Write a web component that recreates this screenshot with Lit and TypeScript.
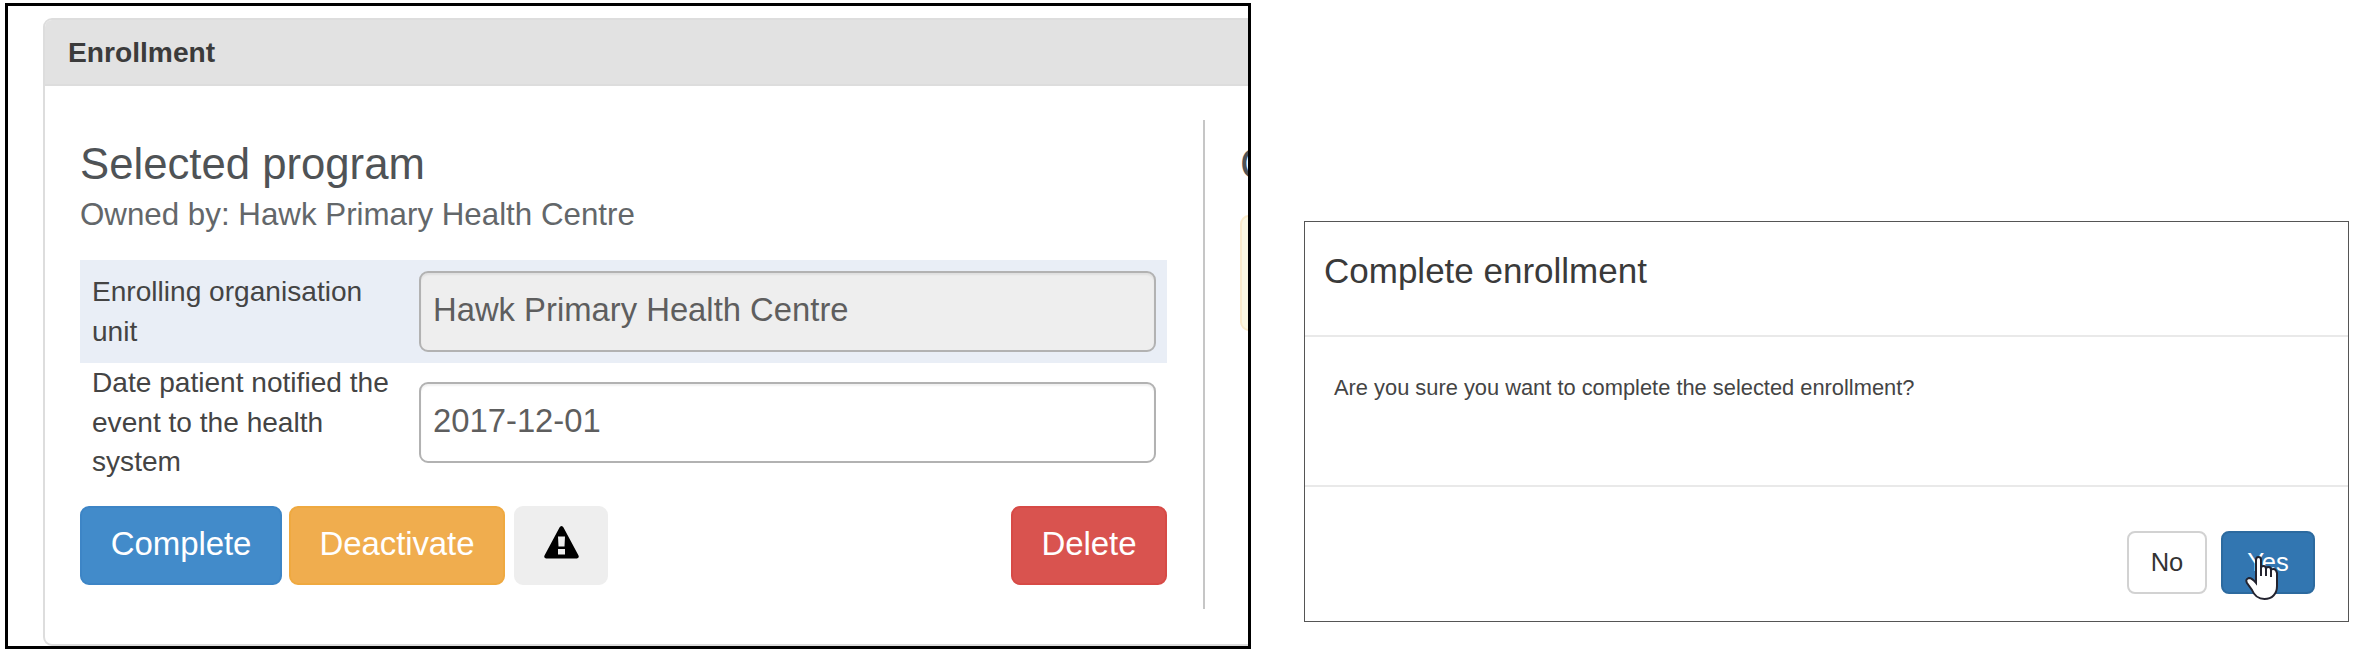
import { LitElement, html, css } from "lit";
import { customElement } from "lit/decorators.js";

@customElement("enrollment-panel")
class EnrollmentPanel extends LitElement {
  static styles = css`
    :host { display: block; box-sizing: border-box; width: 1246px; height: 646px; border: 3px solid #000; overflow: hidden; background: #fff; padding: 12px 0 0 35px; }
    * { box-sizing: border-box; }
    .panel { width: 1900px; height: 628px; border: 2px solid #ddd; border-radius: 9px; overflow: hidden; background: #fff; }
    .head { height: 68px; margin-top: -2px; padding-left: 23px; background: #e2e2e2; border-top: 1px solid #dadada; border-bottom: 2px solid #ddd; font-size: 28.2px; font-weight: 700; line-height: 66px; color: #3b3b3b; }
    .body { display: flex; padding-top: 34px; }
    .program { width: 1160px; height: 489px; padding: 19px 37px 0 35px; border-right: 2px solid #c6c6c6; }
    h2 { margin: 0; font-weight: 400; font-size: 43.7px; line-height: 50px; color: #4f5356; }
    .owner { font-size: 31.3px; line-height: 50px; height: 71px; padding-top: 1px; color: #63676a; }
    .row { display: grid; grid-template-columns: 306px 737px; gap: 21px; align-items: center; width: 1087px; height: 103px; padding-left: 12px; font-size: 28.1px; line-height: 39.5px; color: #444; }
    .row.shaded { background: #e9eef6; }
    .row.date { height: 118px; }
    .field { height: 81px; border: 2px solid #b2b2b2; border-radius: 9px; padding-left: 12px; font-size: 32.8px; line-height: 73px; color: #5e5e5e; background: #fff; box-shadow: inset 0 2px 2px rgba(0,0,0,.06); white-space: nowrap; }
    .field.locked { background: #eee; }
    .actions { display: flex; width: 1087px; margin-top: 25px; }
    button { height: 79px; border: 2px solid; border-radius: 9px; padding: 0 0 4px; font: 33px "Liberation Sans", Arial, sans-serif; letter-spacing: -.1px; color: #fff; display: flex; align-items: center; justify-content: center; }
    .complete { width: 202px; background: #428bca; border-color: #3d85c6; }
    .deactivate { width: 216px; margin-left: 7px; background: #f0ad4e; border-color: #efa940; }
    .warn { width: 94px; margin-left: 9px; background: #eee; border-color: #eee; padding: 0 0 7px; }
    .delete { width: 156px; margin-left: auto; background: #d9534f; border-color: #d74a46; }
    .enrollment { width: 600px; padding: 19px 0 0 35px; }
    .note { width: 560px; height: 116px; margin-top: 26px; border: 2px solid #faebcc; border-radius: 9px; background: #fcf8e3; }
  `;
  render() {
    return html`<div class="panel">
      <div class="head">Enrollment</div>
      <div class="body">
        <section class="program">
          <h2>Selected program</h2>
          <div class="owner">Owned by: Hawk Primary Health Centre</div>
          <div class="row shaded"><span>Enrolling organisation unit</span><div class="field locked">Hawk Primary Health Centre</div></div>
          <div class="row date"><span>Date patient notified the event to the health system</span><div class="field">2017-12-01</div></div>
          <div class="actions">
            <button class="complete">Complete</button>
            <button class="deactivate">Deactivate</button>
            <button class="warn" aria-label="Mark for follow-up">
              <svg width="35" height="33" viewBox="0 0 35 33"><path d="M17.5 0Q18.8 0 19.5 1.5L34.5 29.5Q35.5 32 33 32.5H2Q-.5 32 .5 29.5L15.5 1.5Q16.2 0 17.5 0Z" fill="#000"/><path d="M14 10.5H21L20.5 20.5H14.5ZM14 23H21V28.5H14Z" fill="#eee"/></svg>
            </button>
            <button class="delete">Delete</button>
          </div>
        </section>
        <section class="enrollment"><h2>C</h2><div class="note"></div></section>
      </div>
    </div>`;
  }
}

@customElement("confirm-dialog")
class ConfirmDialog extends LitElement {
  static styles = css`
    :host { display: block; box-sizing: border-box; width: 1045px; height: 401px; border: 1px solid #555; background: #fff; color: #333; }
    * { box-sizing: border-box; }
    .title { height: 115px; padding: 22px 0 0 19px; font-size: 35px; line-height: 54px; border-bottom: 2px solid #e9e9e9; color: #3a3a3a; }
    .message { height: 150px; padding: 35px 0 0 29px; font-size: 21.85px; line-height: 32px; border-bottom: 2px solid #e9e9e9; color: #444; }
    .footer { display: flex; justify-content: flex-end; gap: 14px; padding: 44px 33px 0 0; }
    button { height: 63px; border: 2px solid #d2d2d2; border-radius: 8px; padding: 0; font: 25.5px "Liberation Sans", Arial, sans-serif; background: #fff; color: #333; }
    .no { width: 80px; }
    .yes { position: relative; width: 94px; background: #3276b1; border-color: #2c6a9f; color: #fff; }
    .pointer { position: absolute; left: 22px; top: 22px; }
  `;
  render() {
    return html`
      <div class="title">Complete enrollment</div>
      <div class="message">Are you sure you want to complete the selected enrollment?</div>
      <div class="footer">
        <button class="no">No</button>
        <button class="yes">Yes
          <svg class="pointer" width="34" height="46" viewBox="0 0 34 46"><path d="M11 25V5Q11 2 13.5 2T16 5V13Q16 11 18.5 11T21 14Q21 12 23.5 12T26 15Q26 14 28.5 14T32 18V31C32 39 27 44 19.500 44C12 44 9 40 7 35L2 28Q0 24 4 23Q7 23 11 28Z" fill="#fff" stroke="#23232f" stroke-width="2"/><path d="M16 12V21M21 13V21M26 15V22" stroke="#23232f" stroke-width="2" fill="none"/></svg>
        </button>
      </div>`;
  }
}

@customElement("app-root")
class AppRoot extends LitElement {
  static styles = css`
    :host { display: flex; align-items: flex-start; box-sizing: border-box; width: 2355px; height: 655px; padding: 3px 0 0 5px; overflow: hidden; background: #fff; font-family: "Liberation Sans", Arial, sans-serif; }
    confirm-dialog { margin: 218px 0 0 53px; }
  `;
  render() {
    return html`<enrollment-panel></enrollment-panel><confirm-dialog></confirm-dialog>`;
  }
}
